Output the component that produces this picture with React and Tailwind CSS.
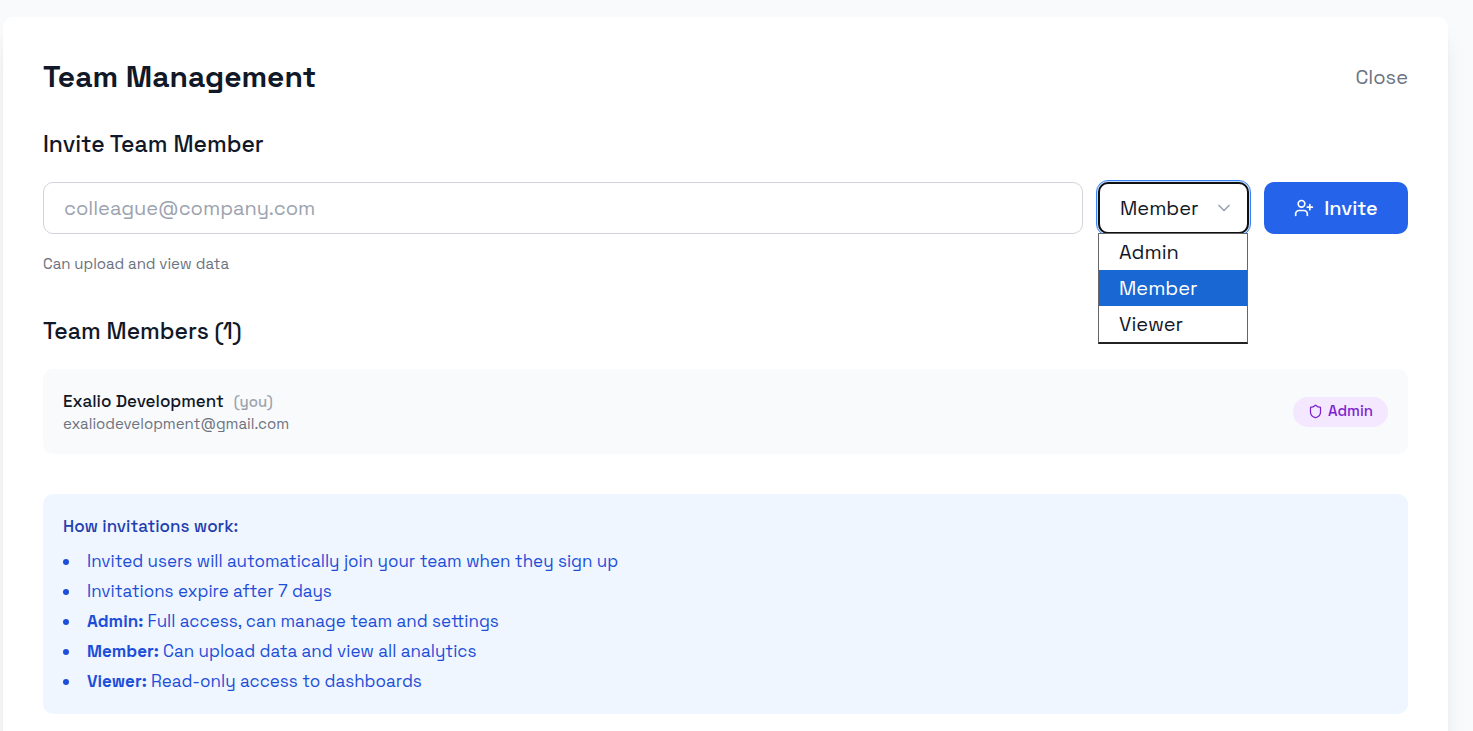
import React from 'react'
import { useState } from 'react'
import { ChevronDown, Shield, UserPlus } from 'lucide-react'

const roles = [
  { value: 'admin', label: 'Admin', hint: 'Full access, can manage team and settings' },
  { value: 'member', label: 'Member', hint: 'Can upload and view data' },
  { value: 'viewer', label: 'Viewer', hint: 'Read-only access to dashboards' },
]

const members = [
  { id: 1, name: 'Exalio Development', email: 'exaliodevelopment@gmail.com', role: 'Admin', isYou: true },
]

const notes = [
  { text: 'Invited users will automatically join your team when they sign up' },
  { text: 'Invitations expire after 7 days' },
  { label: 'Admin:', text: 'Full access, can manage team and settings' },
  { label: 'Member:', text: 'Can upload data and view all analytics' },
  { label: 'Viewer:', text: 'Read-only access to dashboards' },
]

function RoleSelect({ role, setRole }) {
  const [open, setOpen] = useState(true)

  const pick = (value) => {
    setRole(value)
    setOpen(false)
  }

  return (
    <div className="relative w-[151px] shrink-0">
      <select
        aria-label="Role"
        value={role}
        onChange={(e) => setRole(e.target.value)}
        onMouseDown={(e) => {
          e.preventDefault()
          setOpen(!open)
        }}
        className="h-[52px] w-full appearance-none rounded-[10px] border-2 border-[#101010] bg-white pl-5 pr-10 text-[20px] text-[#111827] ring-1 ring-[#bfdbfe] outline-1 outline-offset-1 outline-[#3b82f6]"
      >
        {roles.map((r) => (
          <option key={r.value} value={r.value}>{r.label}</option>
        ))}
      </select>
      <ChevronDown size={20} strokeWidth={2} className="pointer-events-none absolute right-[15px] top-4 text-[#9ca3af]" />
      {open && (
        <ul className="absolute left-0 top-[51px] w-[150px] border border-b-2 border-[#666666] border-b-[#222222] bg-white">
          {roles.map((r) => (
            <li key={r.value}>
              <button
                type="button"
                onClick={() => pick(r.value)}
                className={
                  r.value === role
                    ? 'block h-9 w-full bg-[#1967d2] px-5 text-left text-[20px] text-white'
                    : 'block h-9 w-full px-5 text-left text-[20px] text-[#111827]'
                }
              >
                {r.label}
              </button>
            </li>
          ))}
        </ul>
      )}
    </div>
  )
}

function App() {
  const [email, setEmail] = useState('')
  const [role, setRole] = useState('member')
  const current = roles.find((r) => r.value === role)

  return (
    <div className="min-h-screen overflow-hidden bg-[#f9fafb] pl-[3px] pr-[25px] pt-[17px] font-['Space_Grotesk',Inter,sans-serif]">
      <div className="min-h-screen rounded-[10px] bg-white p-10 shadow-xl">
        <div className="mb-[30px] flex items-center justify-between">
          <h1 className="text-[30px] leading-10 font-bold text-[#111827]">Team Management</h1>
          <button type="button" className="text-[20px] leading-8 text-[#6b7280]">Close</button>
        </div>

        <h2 className="mb-5 text-[23px] leading-[35px] font-medium text-[#111827]">Invite Team Member</h2>
        <form className="flex gap-[15px]" onSubmit={(e) => e.preventDefault()}>
          <input
            type="email"
            aria-label="Email address"
            placeholder="colleague@company.com"
            value={email}
            onChange={(e) => setEmail(e.target.value)}
            className="h-[52px] min-w-0 flex-1 rounded-[10px] border border-[#d1d5db] px-5 text-[20px] text-[#111827] placeholder:text-[#9ca3af]"
          />
          <RoleSelect role={role} setRole={setRole} />
          <button
            type="submit"
            className="flex h-[52px] w-36 shrink-0 items-center justify-center gap-[10px] rounded-[10px] bg-[#2563eb] text-[20px] font-medium text-white"
          >
            <UserPlus size={20} />
            Invite
          </button>
        </form>
        <p className="mt-5 text-[15px] leading-5 text-[#6b7280]">{current.hint}</p>

        <h2 className="mt-10 mb-5 text-[23px] leading-[35px] font-medium text-[#111827]">
          Team Members ({members.length})
        </h2>
        {members.map((m) => (
          <div key={m.id} className="flex items-center justify-between rounded-[10px] bg-[#f9fafb] p-5">
            <div>
              <p className="text-[17px] leading-[25px] font-medium text-[#111827]">
                {m.name}
                {m.isYou && <span className="ml-[10px] text-[15px] text-[#9ca3af]">(you)</span>}
              </p>
              <p className="text-[15px] leading-5 text-[#6b7280]">{m.email}</p>
            </div>
            <span className="flex h-[30px] items-center gap-[5px] rounded-full bg-[#f3e8ff] px-[15px] text-[15px] font-medium text-[#7e22ce]">
              <Shield size={15} />
              {m.role}
            </span>
          </div>
        ))}

        <div className="mt-10 rounded-[10px] bg-[#eff6ff] p-5">
          <h3 className="mb-[10px] text-[17px] leading-[25px] font-medium text-[#1e40af]">How invitations work:</h3>
          <ul className="list-inside list-disc space-y-[5px] text-[17px] leading-[25px] text-[#1d4ed8]">
            {notes.map((note) => (
              <li key={note.text}>
                {note.label && <strong>{note.label} </strong>}
                {note.text}
              </li>
            ))}
          </ul>
        </div>
      </div>
    </div>
  )
}

export default App
